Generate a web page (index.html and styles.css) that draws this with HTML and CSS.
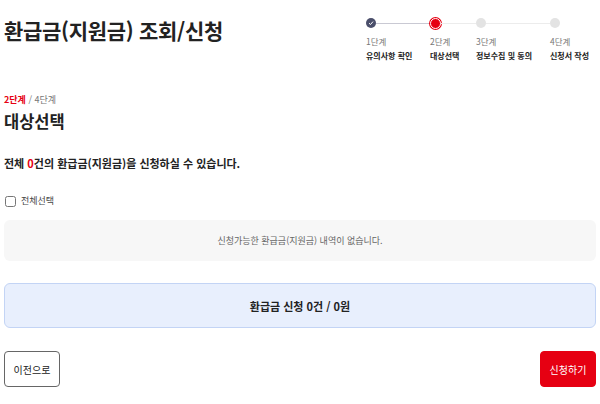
FILE: index.html
```html
<!DOCTYPE html>
<html lang="ko">
<head>
    <meta charset="UTF-8">
    <meta name="viewport" content="width=device-width, initial-scale=1.0">
    <title>환급금(지원금) 조회/신청</title>
    <link rel="stylesheet" href="styles.css">
</head>
<body>

<div class="page">
    <div class="page-head">
        <h1 class="page-title">환급금(지원금) 조회/신청</h1>
        <ol class="steps">
            <li class="step done">
                <div class="step-track">
                    <span class="step-dot">
                        <svg width="6" height="6" viewBox="0 0 6 6"><path d="M1 3.2 L2.5 4.5 L5 1.6" fill="none" stroke="#fff" stroke-width="1"/></svg>
                    </span>
                    <span class="step-line"></span>
                </div>
                <div class="step-num">1단계</div>
                <div class="step-name">유의사항 확인</div>
            </li>
            <li class="step current">
                <div class="step-track">
                    <span class="step-dot"></span>
                    <span class="step-line"></span>
                </div>
                <div class="step-num">2단계</div>
                <div class="step-name">대상선택</div>
            </li>
            <li class="step wide">
                <div class="step-track">
                    <span class="step-dot"></span>
                    <span class="step-line"></span>
                </div>
                <div class="step-num">3단계</div>
                <div class="step-name">정보수집 및 동의</div>
            </li>
            <li class="step last">
                <div class="step-track">
                    <span class="step-dot"></span>
                </div>
                <div class="step-num">4단계</div>
                <div class="step-name">신청서 작성</div>
            </li>
        </ol>
    </div>

    <div class="section">
        <div class="section-step"><strong>2단계</strong> / 4단계</div>
        <h2 class="section-title">대상선택</h2>
    </div>

    <p class="summary">전체 <em>0</em>건의 환급금(지원금)을 신청하실 수 있습니다.</p>

    <label class="check-all">
        <input type="checkbox">
        <span>전체선택</span>
    </label>

    <div class="empty-box">신청가능한 환급금(지원금) 내역이 없습니다.</div>

    <div class="total-box">환급금 신청 0건 / 0원</div>

    <div class="actions">
        <button class="btn btn-prev">이전으로</button>
        <button class="btn btn-apply">신청하기</button>
    </div>
</div>

</body>
</html>
```

FILE: styles.css
```css
body, html {
    margin: 0;
    padding: 0;
    font-family: "Noto Sans CJK KR", "Noto Sans", sans-serif;
    background-color: #fff;
    color: #222;
}
.page {
    padding: 0 4px;
}
.page-head {
    display: flex;
    justify-content: space-between;
    align-items: flex-start;
    height: 94px;
}
.page-title {
    margin: 14px 0 0;
    font-size: 21px;
    line-height: 32px;
    font-weight: 700;
    letter-spacing: -0.3px;
}
.steps {
    display: flex;
    list-style: none;
    margin: 17px 0 0;
    padding: 0;
    width: 230px;
}
.step {
    width: 64px;
}
.step.current {
    width: 46px;
}
.step.wide {
    width: 74px;
}
.step.last {
    flex: 1;
}
.step-track {
    display: flex;
    align-items: center;
    height: 12px;
}
.step-dot {
    display: flex;
    align-items: center;
    justify-content: center;
    width: 10px;
    height: 10px;
    border-radius: 50%;
    background-color: #e3e3e3;
    box-sizing: border-box;
    flex-shrink: 0;
}
.step.done .step-dot {
    background-color: #4b4f6b;
}
.step.current .step-dot {
    width: 11px;
    height: 11px;
    background-color: #e60012;
    border: 1.5px solid #fff;
    box-shadow: 0 0 0 1px #e60012;
}
.step-line {
    flex: 1;
    height: 1px;
    background-color: #ececec;
}
.step.done .step-line {
    background-color: #c9c9d3;
}
.step-num {
    margin-top: 6px;
    font-size: 8.5px;
    line-height: 12px;
    color: #777;
}
.step-name {
    margin-top: 3px;
    font-size: 8px;
    line-height: 12px;
    font-weight: 700;
    color: #222;
    white-space: nowrap;
}
.section-step {
    font-size: 9px;
    line-height: 12px;
    color: #777;
}
.section-step strong {
    color: #e60012;
}
.section-title {
    margin: 2px 0 0;
    font-size: 16.5px;
    line-height: 26px;
    font-weight: 700;
}
.summary {
    margin: 20px 0 0;
    font-size: 11px;
    line-height: 18px;
    font-weight: 700;
}
.summary em {
    font-style: normal;
    color: #e60012;
}
.check-all {
    display: flex;
    align-items: center;
    gap: 5px;
    margin-top: 23px;
    height: 12px;
    font-size: 9px;
    line-height: 12px;
    color: #444;
}
.check-all input {
    width: 11px;
    height: 11px;
    margin: 0 0 0 1px;
}
.empty-box {
    margin-top: 13px;
    height: 41px;
    display: flex;
    align-items: center;
    justify-content: center;
    background-color: #f7f7f7;
    border-radius: 6px;
    font-size: 9px;
    color: #666;
}
.total-box {
    margin-top: 22px;
    height: 45px;
    display: flex;
    align-items: center;
    justify-content: center;
    background-color: #e8effd;
    border: 1px solid #c3d4f5;
    border-radius: 6px;
    box-sizing: border-box;
    font-size: 11px;
    font-weight: 700;
    color: #222;
}
.actions {
    display: flex;
    justify-content: space-between;
    margin-top: 23px;
}
.btn {
    width: 56px;
    height: 36px;
    border-radius: 4px;
    font-family: inherit;
    font-size: 10px;
    cursor: pointer;
    padding: 0;
}
.btn-prev {
    background-color: #fff;
    border: 1px solid #666;
    color: #222;
}
.btn-apply {
    background-color: #e60012;
    border: 1px solid #e60012;
    color: #fff;
}
```
